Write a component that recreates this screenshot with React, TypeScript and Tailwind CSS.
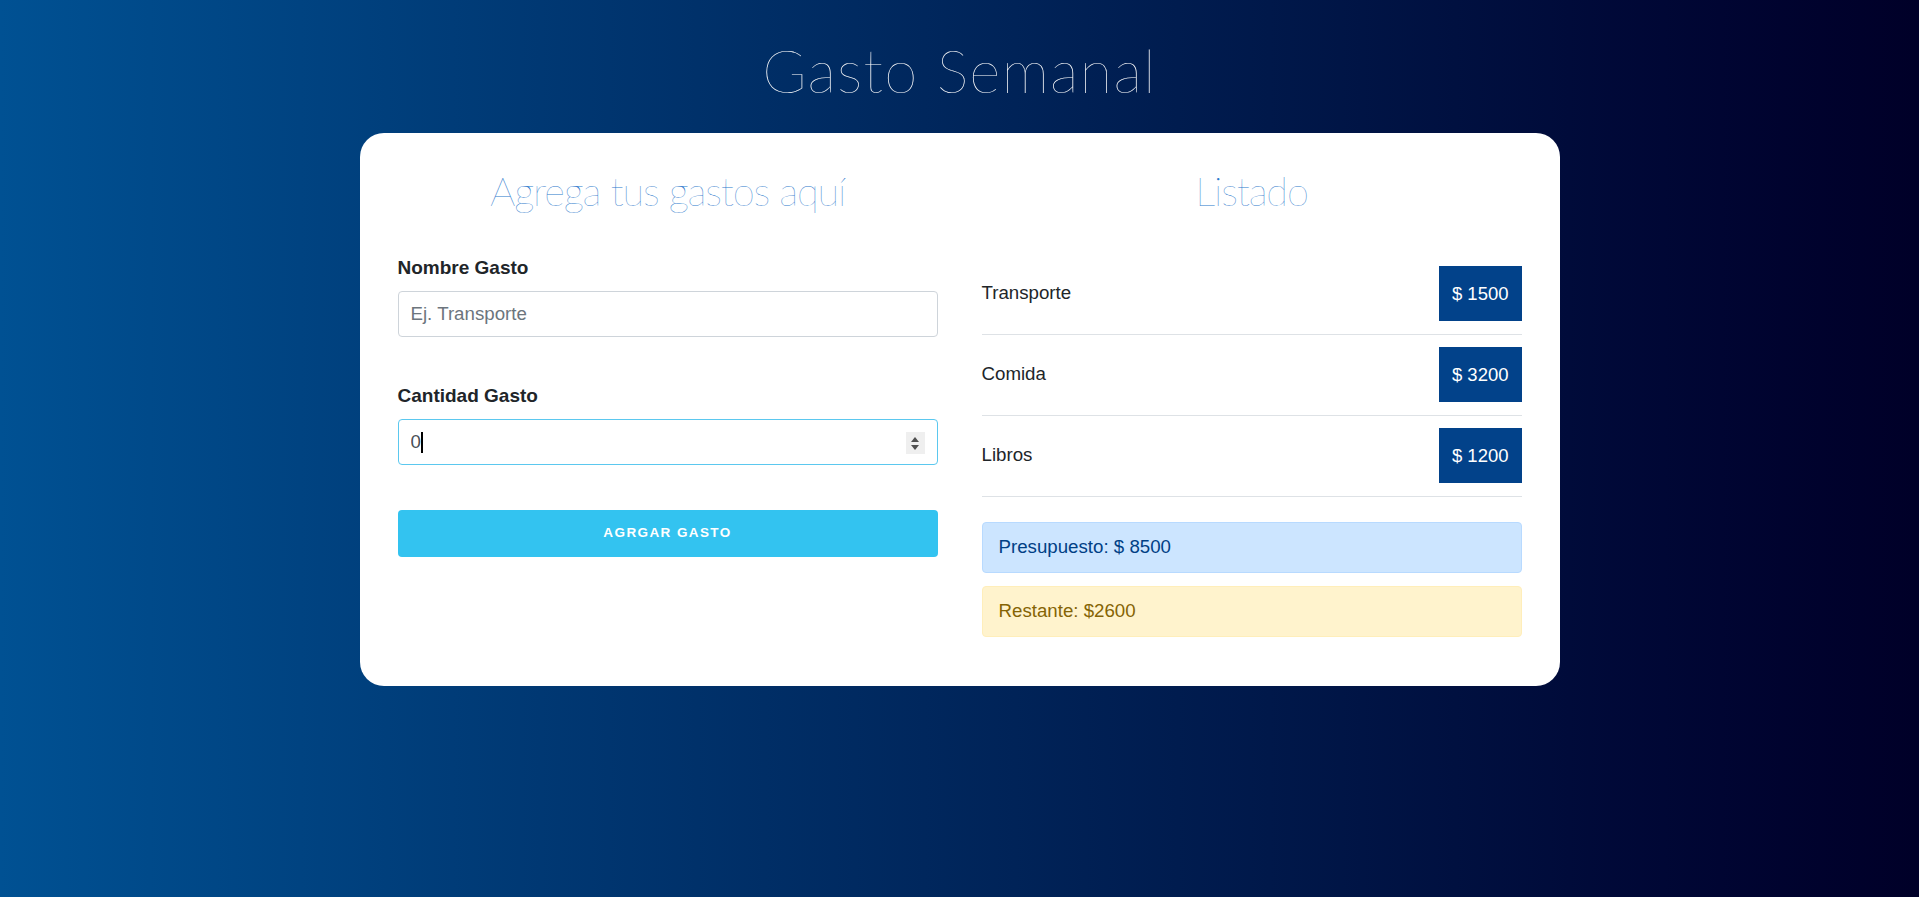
import React from "react";

type Gasto = {
    id: number
    nombre: string
    cantidad: number
}

const gastos: Gasto[] = [
    { id: 1, nombre: "Transporte", cantidad: 1500 },
    { id: 2, nombre: "Comida", cantidad: 3200 },
    { id: 3, nombre: "Libros", cantidad: 1200 },
]

const presupuesto = 8500
const restante = 2600

const heading = "text-center font-['Lato',sans-serif] font-extralight text-[40px] leading-[48px] tracking-[-1.2px] text-[#2a78cc]"
const label = "block font-bold text-[19px] leading-[27px] text-[#212529] mb-[10px]"
const input = "block w-full h-[46px] px-3 text-[18.7px] rounded-[4px] border bg-white text-[#495057] outline-none"

const Formulario = () => (
    <form className="w-[540px]" onSubmit={(e) => e.preventDefault()}>
        <h2 className={heading}>Agrega tus gastos aquí</h2>

        <div className="mt-[39px]">
            <label className={label}>Nombre Gasto</label>
            <input
                type="text"
                placeholder="Ej. Transporte"
                className={`${input} border-[#ced4da] placeholder:text-[#6c757d]`}
            />
        </div>

        <div className="mt-[45px]">
            <label className={label}>Cantidad Gasto</label>
            <div className="relative">
                <input
                    type="text"
                    value="0"
                    readOnly
                    className={`${input} border-[#5bc8ef]`}
                />
                {/* caret */}
                <span className="absolute left-[23px] top-[13px] w-[2px] h-[21px] bg-black" />
                {/* spin buttons */}
                <span className="absolute right-[13px] top-[13px] w-[19px] h-[22px] bg-[#efefef] flex flex-col items-center justify-center gap-[3px]">
                    <span className="w-0 h-0 border-l-[4.5px] border-r-[4.5px] border-b-[5px] border-l-transparent border-r-transparent border-b-[#505050]" />
                    <span className="w-0 h-0 border-l-[4.5px] border-r-[4.5px] border-t-[5px] border-l-transparent border-r-transparent border-t-[#505050]" />
                </span>
            </div>
        </div>

        <button
            type="submit"
            className="mt-[45px] w-full h-[47px] rounded-[4px] bg-[#33c3f0] text-white font-bold uppercase text-[13.5px] tracking-[1.4px]"
        >
            Agrgar Gasto
        </button>
    </form>
)

const Listado = () => (
    <div className="w-[540px]">
        <h2 className={heading}>Listado</h2>

        <ul className="mt-[39px]">
            {gastos.map((gasto) => (
                <li key={gasto.id} className="flex items-center justify-between pt-3 pb-[13px] border-b border-[#dee2e6]">
                    <span className="text-[18.7px] text-[#212529]">{gasto.nombre}</span>
                    <span className="h-[55px] px-[13px] flex items-center bg-[#02428a] text-white text-[18.5px]">$ {gasto.cantidad}</span>
                </li>
            ))}
        </ul>

        <div className="mt-[25px] h-[51px] px-4 flex items-center rounded-[4px] border border-[#b8daff] bg-[#cce5ff] text-[#004085] text-[18.7px]">
            Presupuesto: $ {presupuesto}
        </div>
        <div className="mt-[13px] h-[51px] px-4 flex items-center rounded-[4px] border border-[#ffeeba] bg-[#fff3cd] text-[#856404] text-[18.7px]">
            Restante: ${restante}
        </div>
    </div>
)

export default function App() {
    return (
        <div className="min-h-screen bg-linear-to-r from-[#005193] to-[#000028] pt-[34px] font-['Liberation_Sans',Arial,sans-serif]">
            <h1 className="text-center text-white font-['Lato',sans-serif] font-extralight text-[60px] leading-[72px] tracking-[1.2px]">Gasto Semanal</h1>

            <div className="mx-auto mt-[27px] w-[1200px] bg-white rounded-[24px] px-[38px] pt-[34px] pb-[49px] flex gap-[44px] items-start">
                <Formulario />
                <Listado />
            </div>
        </div>
    )
}
